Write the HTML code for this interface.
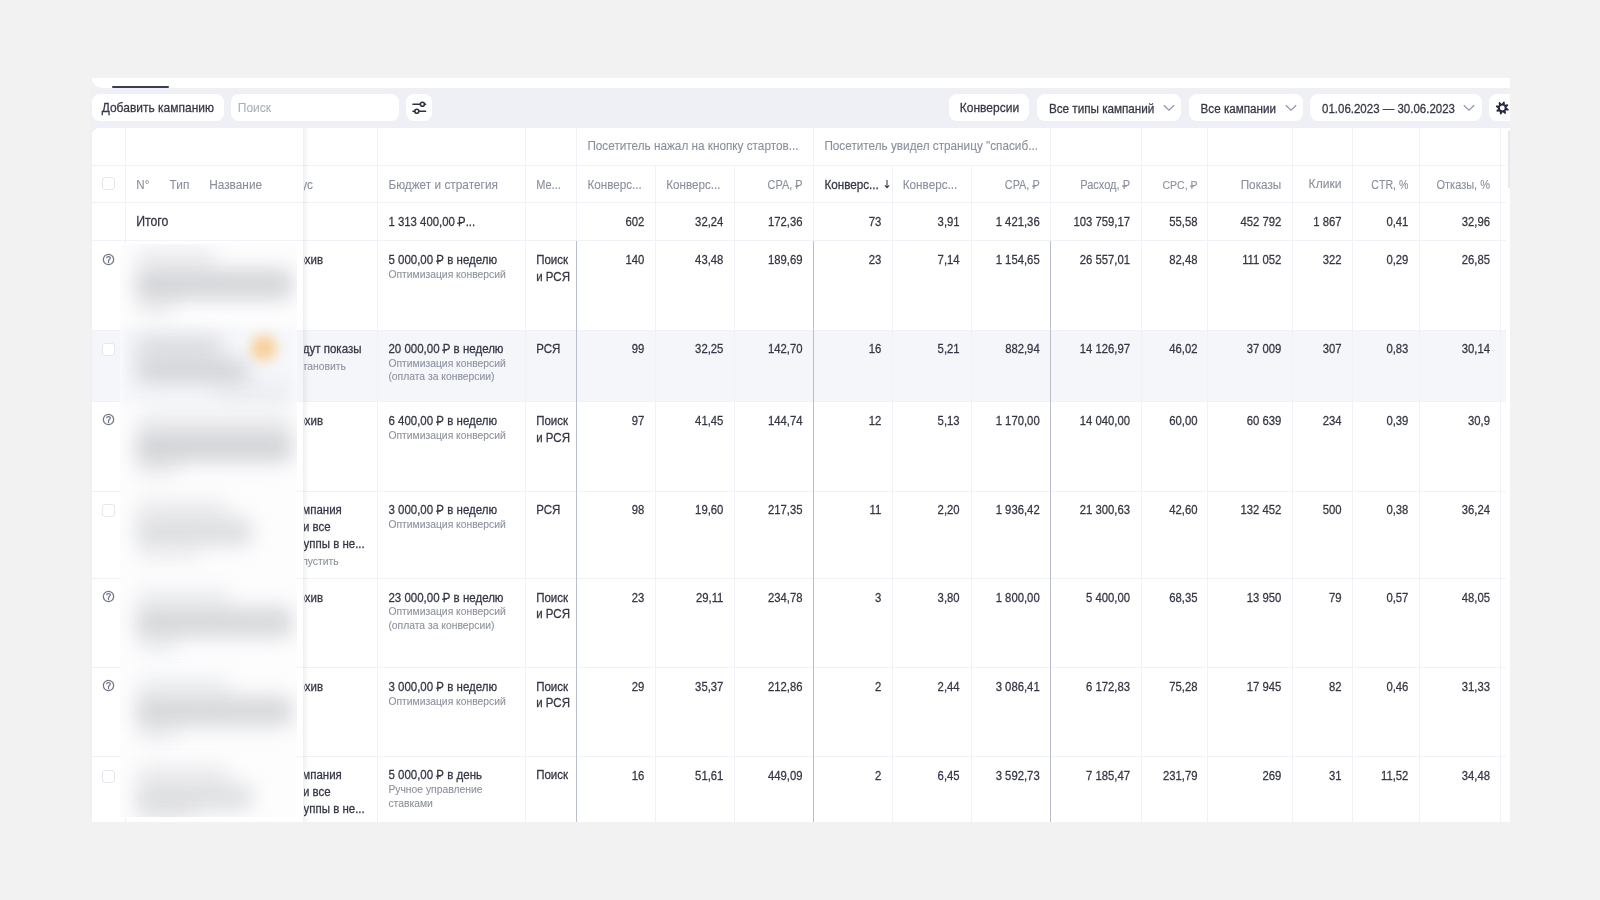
<!DOCTYPE html>
<html><head><meta charset="utf-8"><style>
html,body{margin:0;padding:0}
body{width:1600px;height:900px;overflow:hidden;background:#f2f2f2;position:relative;font-family:"Liberation Sans",sans-serif}
#app{position:absolute;left:0;top:0;width:1510px;height:900px;overflow:hidden}
.r{position:absolute}
.t{position:absolute;white-space:nowrap;transform:scaleY(1.12);transform-origin:0 0.97em;-webkit-text-stroke:0.25px currentColor}
.g{-webkit-text-stroke:0.1px currentColor}
.rb{position:relative;display:inline-block}
.rb::after{content:"";position:absolute;left:-0.06em;width:0.42em;top:0.675em;height:0.075em;background:currentColor}
</style></head><body><div id="app">
<div class="r" style="left:92px;top:78px;width:1418px;height:10px;background:#fff;border-bottom-left-radius:10px;"></div>
<div class="r" style="left:91px;top:87.5px;width:1419px;height:734.5px;background:#eef0f5;"></div>
<div class="r" style="left:112px;top:86px;width:57px;height:2px;background:#393c52;border-radius:1px;"></div>
<div class="r" style="left:92px;top:94px;width:132px;height:27px;background:#fff;border-radius:8px;"></div>
<div class="t" style="top:101.34px;font-size:12px;line-height:15.0px;color:#353745;left:101.7px;">Добавить кампанию</div>
<div class="r" style="left:231px;top:94px;width:168px;height:27px;background:#fff;border-radius:8px;"></div>
<div class="t g" style="top:101.34px;font-size:12px;line-height:15.0px;color:#aab0bd;left:237.8px;">Поиск</div>
<div class="r" style="left:406px;top:94px;width:26px;height:27px;background:#fff;border-radius:8px;"></div>
<svg class="r" style="left:411px;top:100px" width="16" height="16" viewBox="0 0 16 16"><g stroke="#2f3245" stroke-width="1.6" fill="none" stroke-linecap="round"><line x1="2" y1="4.3" x2="9.2" y2="4.3"/><circle cx="11.4" cy="4.3" r="2"/><line x1="13.6" y1="4.3" x2="14.6" y2="4.3"/><line x1="8" y1="11.3" x2="14.6" y2="11.3"/><circle cx="5.8" cy="11.3" r="2"/><line x1="2" y1="11.3" x2="3.6" y2="11.3"/></g></svg>
<div class="r" style="left:949.4px;top:94px;width:80px;height:27px;background:#fff;border-radius:8px;"></div>
<div class="t" style="top:101.34px;font-size:12px;line-height:15.0px;color:#353745;left:959.8px;">Конверсии</div>
<div class="r" style="left:1037px;top:94px;width:144.4px;height:27px;background:#fff;border-radius:8px;"></div>
<div class="t" style="top:101.63px;font-size:11.7px;line-height:14.62px;color:#353745;left:1048.9px;">Все типы кампаний</div>
<div class="r" style="left:1189px;top:94px;width:114px;height:27px;background:#fff;border-radius:8px;"></div>
<div class="t" style="top:101.68px;font-size:11.65px;line-height:14.56px;color:#353745;left:1200.6px;">Все кампании</div>
<div class="r" style="left:1310px;top:94px;width:171.6px;height:27px;background:#fff;border-radius:8px;"></div>
<div class="t" style="top:101.82px;font-size:11.5px;line-height:14.38px;color:#353745;left:1322px;">01.06.2023 — 30.06.2023</div>
<div class="r" style="left:1489px;top:94px;width:40px;height:27px;background:#fff;border-radius:8px;"></div>
<svg class="r" style="left:1162.6px;top:104px" width="12" height="8" viewBox="0 0 12 8"><polyline points="0.8,1.2 6,6.2 11.2,1.2" fill="none" stroke="#8e97aa" stroke-width="1.3"/></svg>
<svg class="r" style="left:1284.5px;top:104px" width="12" height="8" viewBox="0 0 12 8"><polyline points="0.8,1.2 6,6.2 11.2,1.2" fill="none" stroke="#8e97aa" stroke-width="1.3"/></svg>
<svg class="r" style="left:1463.4px;top:104px" width="12" height="8" viewBox="0 0 12 8"><polyline points="0.8,1.2 6,6.2 11.2,1.2" fill="none" stroke="#8e97aa" stroke-width="1.3"/></svg>
<svg class="r" style="left:1495px;top:100.6px" width="15" height="15" viewBox="0 0 15 15"><path fill="#262a3f" fill-rule="evenodd" d="M6.81 2.93 L8.54 0.52 L9.68 0.84 L9.88 3.81 L9.83 3.77 L12.76 3.29 L13.34 4.33 L11.38 6.57 L11.37 6.51 L13.78 8.24 L13.46 9.38 L10.49 9.58 L10.53 9.53 L11.01 12.46 L9.97 13.04 L7.73 11.08 L7.79 11.07 L6.06 13.48 L4.92 13.16 L4.72 10.19 L4.77 10.23 L1.84 10.71 L1.26 9.67 L3.22 7.43 L3.23 7.49 L0.82 5.76 L1.14 4.62 L4.11 4.42 L4.07 4.47 L3.59 1.54 L4.63 0.96 L6.87 2.92 Z M9.75 7 A2.45 2.45 0 1 0 4.85 7 A2.45 2.45 0 1 0 9.75 7 Z"/></svg>
<div class="r" style="left:92px;top:128px;width:1418px;height:693.5px;background:#fff;border-top-left-radius:8px;"></div>
<div class="r" style="left:92px;top:331px;width:1413.5px;height:70px;background:#f4f6fa;"></div>
<div class="r" style="left:92px;top:165px;width:1413.5px;height:1px;background:#f0f2f7;"></div>
<div class="r" style="left:92px;top:202px;width:1413.5px;height:1px;background:#f0f2f7;"></div>
<div class="r" style="left:92px;top:240px;width:1413.5px;height:1px;background:#f0f2f7;"></div>
<div class="r" style="left:92px;top:330px;width:1413.5px;height:1px;background:#f0f2f7;"></div>
<div class="r" style="left:92px;top:401px;width:1413.5px;height:1px;background:#f0f2f7;"></div>
<div class="r" style="left:92px;top:491px;width:1413.5px;height:1px;background:#f0f2f7;"></div>
<div class="r" style="left:92px;top:578px;width:1413.5px;height:1px;background:#f0f2f7;"></div>
<div class="r" style="left:92px;top:667px;width:1413.5px;height:1px;background:#f0f2f7;"></div>
<div class="r" style="left:92px;top:756px;width:1413.5px;height:1px;background:#f0f2f7;"></div>
<div class="r" style="left:125px;top:128px;width:1px;height:693.5px;background:#f0f2f7;"></div>
<div class="r" style="left:377px;top:128px;width:1px;height:693.5px;background:#f0f2f7;"></div>
<div class="r" style="left:525px;top:128px;width:1px;height:693.5px;background:#f0f2f7;"></div>
<div class="r" style="left:655px;top:165px;width:1px;height:656.5px;background:#f0f2f7;"></div>
<div class="r" style="left:734px;top:165px;width:1px;height:656.5px;background:#f0f2f7;"></div>
<div class="r" style="left:892px;top:165px;width:1px;height:656.5px;background:#f0f2f7;"></div>
<div class="r" style="left:971px;top:165px;width:1px;height:656.5px;background:#f0f2f7;"></div>
<div class="r" style="left:1141px;top:128px;width:1px;height:693.5px;background:#f0f2f7;"></div>
<div class="r" style="left:1207px;top:128px;width:1px;height:693.5px;background:#f0f2f7;"></div>
<div class="r" style="left:1292px;top:128px;width:1px;height:693.5px;background:#f0f2f7;"></div>
<div class="r" style="left:1352px;top:128px;width:1px;height:693.5px;background:#f0f2f7;"></div>
<div class="r" style="left:1419px;top:128px;width:1px;height:693.5px;background:#f0f2f7;"></div>
<div class="r" style="left:1500px;top:128px;width:1px;height:693.5px;background:#f0f2f7;"></div>
<div class="r" style="left:576px;top:128px;width:1px;height:113px;background:#f0f2f7;"></div>
<div class="r" style="left:576px;top:241px;width:1px;height:580.5px;background:#b9bfcd;"></div>
<div class="r" style="left:813px;top:128px;width:1px;height:113px;background:#f0f2f7;"></div>
<div class="r" style="left:813px;top:241px;width:1px;height:580.5px;background:#b9bfcd;"></div>
<div class="r" style="left:1050px;top:128px;width:1px;height:113px;background:#f0f2f7;"></div>
<div class="r" style="left:1050px;top:241px;width:1px;height:580.5px;background:#b9bfcd;"></div>
<div class="r" style="left:1508px;top:131px;width:2px;height:57px;background:#e6e9f1;"></div>
<div class="t g" style="top:138.87px;font-size:11.76px;line-height:14.7px;color:#8a8f9c;left:587.4px;">Посетитель нажал на кнопку стартов...</div>
<div class="t g" style="top:138.87px;font-size:11.76px;line-height:14.7px;color:#8a8f9c;left:824.4px;">Посетитель увидел страницу "спасиб...</div>
<div class="t g" style="top:177.69px;font-size:11.85px;line-height:14.81px;color:#8a8f9c;left:388.4px;">Бюджет и стратегия</div>
<div class="t g" style="top:178.51px;font-size:11px;line-height:13.75px;color:#8a8f9c;left:536.2px;">Ме...</div>
<div class="t g" style="top:177.83px;font-size:11.7px;line-height:14.62px;color:#8a8f9c;left:587.4px;">Конверс...</div>
<div class="t g" style="top:177.83px;font-size:11.7px;line-height:14.62px;color:#8a8f9c;left:666.2px;">Конверс...</div>
<div class="t g" style="top:178.61px;font-size:10.9px;line-height:13.62px;color:#8a8f9c;left:402.5px;width:400px;text-align:right;">CPA, <span class="rb">Р</span></div>
<div class="t" style="top:177.83px;font-size:11.7px;line-height:14.62px;color:#353745;left:824.4px;">Конверс...</div>
<div class="t g" style="top:177.83px;font-size:11.7px;line-height:14.62px;color:#8a8f9c;left:902.8px;">Конверс...</div>
<div class="t g" style="top:178.61px;font-size:10.9px;line-height:13.62px;color:#8a8f9c;left:639.7px;width:400px;text-align:right;">CPA, <span class="rb">Р</span></div>
<div class="t g" style="top:178.51px;font-size:11px;line-height:13.75px;color:#8a8f9c;left:730px;width:400px;text-align:right;">Расход, <span class="rb">Р</span></div>
<div class="t g" style="top:179.00px;font-size:10.5px;line-height:13.12px;color:#8a8f9c;left:797.5px;width:400px;text-align:right;">CPC, <span class="rb">Р</span></div>
<div class="t g" style="top:177.78px;font-size:11.75px;line-height:14.69px;color:#8a8f9c;left:881.3px;width:400px;text-align:right;">Показы</div>
<div class="t g" style="top:177.45px;font-size:12.1px;line-height:15.12px;color:#8a8f9c;left:941.5px;width:400px;text-align:right;">Клики</div>
<div class="t g" style="top:178.90px;font-size:10.6px;line-height:13.25px;color:#8a8f9c;left:1008.4000000000001px;width:400px;text-align:right;">CTR, %</div>
<div class="t g" style="top:178.51px;font-size:11px;line-height:13.75px;color:#8a8f9c;left:1090px;width:400px;text-align:right;">Отказы, %</div>
<svg class="r" style="left:884px;top:179px" width="6" height="10" viewBox="0 0 6 10"><path d="M3 1 V8.5 M0.8 6.3 L3 8.6 L5.2 6.3" stroke="#3b3d4f" stroke-width="1.1" fill="none"/></svg>
<div class="t" style="top:215.22px;font-size:11.4px;line-height:14.25px;color:#353745;left:388.4px;">1 313 400,00 <span class="rb">Р</span>...</div>
<div class="t" style="top:215.32px;font-size:11.3px;line-height:14.12px;color:#353745;left:244.39999999999998px;width:400px;text-align:right;">602</div>
<div class="t" style="top:215.32px;font-size:11.3px;line-height:14.12px;color:#353745;left:323.4px;width:400px;text-align:right;">32,24</div>
<div class="t" style="top:215.32px;font-size:11.3px;line-height:14.12px;color:#353745;left:402.5px;width:400px;text-align:right;">172,36</div>
<div class="t" style="top:215.32px;font-size:11.3px;line-height:14.12px;color:#353745;left:481.29999999999995px;width:400px;text-align:right;">73</div>
<div class="t" style="top:215.32px;font-size:11.3px;line-height:14.12px;color:#353745;left:559.6px;width:400px;text-align:right;">3,91</div>
<div class="t" style="top:215.32px;font-size:11.3px;line-height:14.12px;color:#353745;left:639.7px;width:400px;text-align:right;">1 421,36</div>
<div class="t" style="top:215.32px;font-size:11.3px;line-height:14.12px;color:#353745;left:730px;width:400px;text-align:right;">103 759,17</div>
<div class="t" style="top:215.32px;font-size:11.3px;line-height:14.12px;color:#353745;left:797.5px;width:400px;text-align:right;">55,58</div>
<div class="t" style="top:215.32px;font-size:11.3px;line-height:14.12px;color:#353745;left:881.3px;width:400px;text-align:right;">452 792</div>
<div class="t" style="top:215.32px;font-size:11.3px;line-height:14.12px;color:#353745;left:941.5px;width:400px;text-align:right;">1 867</div>
<div class="t" style="top:215.32px;font-size:11.3px;line-height:14.12px;color:#353745;left:1008.4000000000001px;width:400px;text-align:right;">0,41</div>
<div class="t" style="top:215.32px;font-size:11.3px;line-height:14.12px;color:#353745;left:1090px;width:400px;text-align:right;">32,96</div>
<div class="t" style="top:253.12px;font-size:11.5px;line-height:14.38px;color:#353745;left:388.4px;">5 000,00 <span class="rb">Р</span> в неделю</div>
<div class="t g" style="top:269.04px;font-size:10.35px;line-height:12.94px;color:#8d929e;left:388.4px;">Оптимизация конверсий</div>
<div class="t" style="top:253.12px;font-size:11.5px;line-height:14.38px;color:#353745;left:536.2px;">Поиск</div>
<div class="t" style="top:269.92px;font-size:11.5px;line-height:14.38px;color:#353745;left:536.2px;">и РСЯ</div>
<div class="t" style="top:253.32px;font-size:11.3px;line-height:14.12px;color:#353745;left:244.39999999999998px;width:400px;text-align:right;">140</div>
<div class="t" style="top:253.32px;font-size:11.3px;line-height:14.12px;color:#353745;left:323.4px;width:400px;text-align:right;">43,48</div>
<div class="t" style="top:253.32px;font-size:11.3px;line-height:14.12px;color:#353745;left:402.5px;width:400px;text-align:right;">189,69</div>
<div class="t" style="top:253.32px;font-size:11.3px;line-height:14.12px;color:#353745;left:481.29999999999995px;width:400px;text-align:right;">23</div>
<div class="t" style="top:253.32px;font-size:11.3px;line-height:14.12px;color:#353745;left:559.6px;width:400px;text-align:right;">7,14</div>
<div class="t" style="top:253.32px;font-size:11.3px;line-height:14.12px;color:#353745;left:639.7px;width:400px;text-align:right;">1 154,65</div>
<div class="t" style="top:253.32px;font-size:11.3px;line-height:14.12px;color:#353745;left:730px;width:400px;text-align:right;">26 557,01</div>
<div class="t" style="top:253.32px;font-size:11.3px;line-height:14.12px;color:#353745;left:797.5px;width:400px;text-align:right;">82,48</div>
<div class="t" style="top:253.32px;font-size:11.3px;line-height:14.12px;color:#353745;left:881.3px;width:400px;text-align:right;">111 052</div>
<div class="t" style="top:253.32px;font-size:11.3px;line-height:14.12px;color:#353745;left:941.5px;width:400px;text-align:right;">322</div>
<div class="t" style="top:253.32px;font-size:11.3px;line-height:14.12px;color:#353745;left:1008.4000000000001px;width:400px;text-align:right;">0,29</div>
<div class="t" style="top:253.32px;font-size:11.3px;line-height:14.12px;color:#353745;left:1090px;width:400px;text-align:right;">26,85</div>
<div class="t" style="top:341.82px;font-size:11.5px;line-height:14.38px;color:#353745;left:388.4px;">20 000,00 <span class="rb">Р</span> в неделю</div>
<div class="t g" style="top:357.74px;font-size:10.35px;line-height:12.94px;color:#8d929e;left:388.4px;">Оптимизация конверсий</div>
<div class="t g" style="top:371.24px;font-size:10.35px;line-height:12.94px;color:#8d929e;left:388.4px;">(оплата за конверсии)</div>
<div class="t" style="top:341.82px;font-size:11.5px;line-height:14.38px;color:#353745;left:536.2px;">РСЯ</div>
<div class="t" style="top:342.02px;font-size:11.3px;line-height:14.12px;color:#353745;left:244.39999999999998px;width:400px;text-align:right;">99</div>
<div class="t" style="top:342.02px;font-size:11.3px;line-height:14.12px;color:#353745;left:323.4px;width:400px;text-align:right;">32,25</div>
<div class="t" style="top:342.02px;font-size:11.3px;line-height:14.12px;color:#353745;left:402.5px;width:400px;text-align:right;">142,70</div>
<div class="t" style="top:342.02px;font-size:11.3px;line-height:14.12px;color:#353745;left:481.29999999999995px;width:400px;text-align:right;">16</div>
<div class="t" style="top:342.02px;font-size:11.3px;line-height:14.12px;color:#353745;left:559.6px;width:400px;text-align:right;">5,21</div>
<div class="t" style="top:342.02px;font-size:11.3px;line-height:14.12px;color:#353745;left:639.7px;width:400px;text-align:right;">882,94</div>
<div class="t" style="top:342.02px;font-size:11.3px;line-height:14.12px;color:#353745;left:730px;width:400px;text-align:right;">14 126,97</div>
<div class="t" style="top:342.02px;font-size:11.3px;line-height:14.12px;color:#353745;left:797.5px;width:400px;text-align:right;">46,02</div>
<div class="t" style="top:342.02px;font-size:11.3px;line-height:14.12px;color:#353745;left:881.3px;width:400px;text-align:right;">37 009</div>
<div class="t" style="top:342.02px;font-size:11.3px;line-height:14.12px;color:#353745;left:941.5px;width:400px;text-align:right;">307</div>
<div class="t" style="top:342.02px;font-size:11.3px;line-height:14.12px;color:#353745;left:1008.4000000000001px;width:400px;text-align:right;">0,83</div>
<div class="t" style="top:342.02px;font-size:11.3px;line-height:14.12px;color:#353745;left:1090px;width:400px;text-align:right;">30,14</div>
<div class="t" style="top:413.82px;font-size:11.5px;line-height:14.38px;color:#353745;left:388.4px;">6 400,00 <span class="rb">Р</span> в неделю</div>
<div class="t g" style="top:429.74px;font-size:10.35px;line-height:12.94px;color:#8d929e;left:388.4px;">Оптимизация конверсий</div>
<div class="t" style="top:413.82px;font-size:11.5px;line-height:14.38px;color:#353745;left:536.2px;">Поиск</div>
<div class="t" style="top:430.62px;font-size:11.5px;line-height:14.38px;color:#353745;left:536.2px;">и РСЯ</div>
<div class="t" style="top:414.02px;font-size:11.3px;line-height:14.12px;color:#353745;left:244.39999999999998px;width:400px;text-align:right;">97</div>
<div class="t" style="top:414.02px;font-size:11.3px;line-height:14.12px;color:#353745;left:323.4px;width:400px;text-align:right;">41,45</div>
<div class="t" style="top:414.02px;font-size:11.3px;line-height:14.12px;color:#353745;left:402.5px;width:400px;text-align:right;">144,74</div>
<div class="t" style="top:414.02px;font-size:11.3px;line-height:14.12px;color:#353745;left:481.29999999999995px;width:400px;text-align:right;">12</div>
<div class="t" style="top:414.02px;font-size:11.3px;line-height:14.12px;color:#353745;left:559.6px;width:400px;text-align:right;">5,13</div>
<div class="t" style="top:414.02px;font-size:11.3px;line-height:14.12px;color:#353745;left:639.7px;width:400px;text-align:right;">1 170,00</div>
<div class="t" style="top:414.02px;font-size:11.3px;line-height:14.12px;color:#353745;left:730px;width:400px;text-align:right;">14 040,00</div>
<div class="t" style="top:414.02px;font-size:11.3px;line-height:14.12px;color:#353745;left:797.5px;width:400px;text-align:right;">60,00</div>
<div class="t" style="top:414.02px;font-size:11.3px;line-height:14.12px;color:#353745;left:881.3px;width:400px;text-align:right;">60 639</div>
<div class="t" style="top:414.02px;font-size:11.3px;line-height:14.12px;color:#353745;left:941.5px;width:400px;text-align:right;">234</div>
<div class="t" style="top:414.02px;font-size:11.3px;line-height:14.12px;color:#353745;left:1008.4000000000001px;width:400px;text-align:right;">0,39</div>
<div class="t" style="top:414.02px;font-size:11.3px;line-height:14.12px;color:#353745;left:1090px;width:400px;text-align:right;">30,9</div>
<div class="t" style="top:503.12px;font-size:11.5px;line-height:14.38px;color:#353745;left:388.4px;">3 000,00 <span class="rb">Р</span> в неделю</div>
<div class="t g" style="top:519.04px;font-size:10.35px;line-height:12.94px;color:#8d929e;left:388.4px;">Оптимизация конверсий</div>
<div class="t" style="top:503.12px;font-size:11.5px;line-height:14.38px;color:#353745;left:536.2px;">РСЯ</div>
<div class="t" style="top:503.32px;font-size:11.3px;line-height:14.12px;color:#353745;left:244.39999999999998px;width:400px;text-align:right;">98</div>
<div class="t" style="top:503.32px;font-size:11.3px;line-height:14.12px;color:#353745;left:323.4px;width:400px;text-align:right;">19,60</div>
<div class="t" style="top:503.32px;font-size:11.3px;line-height:14.12px;color:#353745;left:402.5px;width:400px;text-align:right;">217,35</div>
<div class="t" style="top:503.32px;font-size:11.3px;line-height:14.12px;color:#353745;left:481.29999999999995px;width:400px;text-align:right;">11</div>
<div class="t" style="top:503.32px;font-size:11.3px;line-height:14.12px;color:#353745;left:559.6px;width:400px;text-align:right;">2,20</div>
<div class="t" style="top:503.32px;font-size:11.3px;line-height:14.12px;color:#353745;left:639.7px;width:400px;text-align:right;">1 936,42</div>
<div class="t" style="top:503.32px;font-size:11.3px;line-height:14.12px;color:#353745;left:730px;width:400px;text-align:right;">21 300,63</div>
<div class="t" style="top:503.32px;font-size:11.3px;line-height:14.12px;color:#353745;left:797.5px;width:400px;text-align:right;">42,60</div>
<div class="t" style="top:503.32px;font-size:11.3px;line-height:14.12px;color:#353745;left:881.3px;width:400px;text-align:right;">132 452</div>
<div class="t" style="top:503.32px;font-size:11.3px;line-height:14.12px;color:#353745;left:941.5px;width:400px;text-align:right;">500</div>
<div class="t" style="top:503.32px;font-size:11.3px;line-height:14.12px;color:#353745;left:1008.4000000000001px;width:400px;text-align:right;">0,38</div>
<div class="t" style="top:503.32px;font-size:11.3px;line-height:14.12px;color:#353745;left:1090px;width:400px;text-align:right;">36,24</div>
<div class="t" style="top:590.52px;font-size:11.5px;line-height:14.38px;color:#353745;left:388.4px;">23 000,00 <span class="rb">Р</span> в неделю</div>
<div class="t g" style="top:606.44px;font-size:10.35px;line-height:12.94px;color:#8d929e;left:388.4px;">Оптимизация конверсий</div>
<div class="t g" style="top:619.94px;font-size:10.35px;line-height:12.94px;color:#8d929e;left:388.4px;">(оплата за конверсии)</div>
<div class="t" style="top:590.52px;font-size:11.5px;line-height:14.38px;color:#353745;left:536.2px;">Поиск</div>
<div class="t" style="top:607.32px;font-size:11.5px;line-height:14.38px;color:#353745;left:536.2px;">и РСЯ</div>
<div class="t" style="top:590.72px;font-size:11.3px;line-height:14.12px;color:#353745;left:244.39999999999998px;width:400px;text-align:right;">23</div>
<div class="t" style="top:590.72px;font-size:11.3px;line-height:14.12px;color:#353745;left:323.4px;width:400px;text-align:right;">29,11</div>
<div class="t" style="top:590.72px;font-size:11.3px;line-height:14.12px;color:#353745;left:402.5px;width:400px;text-align:right;">234,78</div>
<div class="t" style="top:590.72px;font-size:11.3px;line-height:14.12px;color:#353745;left:481.29999999999995px;width:400px;text-align:right;">3</div>
<div class="t" style="top:590.72px;font-size:11.3px;line-height:14.12px;color:#353745;left:559.6px;width:400px;text-align:right;">3,80</div>
<div class="t" style="top:590.72px;font-size:11.3px;line-height:14.12px;color:#353745;left:639.7px;width:400px;text-align:right;">1 800,00</div>
<div class="t" style="top:590.72px;font-size:11.3px;line-height:14.12px;color:#353745;left:730px;width:400px;text-align:right;">5 400,00</div>
<div class="t" style="top:590.72px;font-size:11.3px;line-height:14.12px;color:#353745;left:797.5px;width:400px;text-align:right;">68,35</div>
<div class="t" style="top:590.72px;font-size:11.3px;line-height:14.12px;color:#353745;left:881.3px;width:400px;text-align:right;">13 950</div>
<div class="t" style="top:590.72px;font-size:11.3px;line-height:14.12px;color:#353745;left:941.5px;width:400px;text-align:right;">79</div>
<div class="t" style="top:590.72px;font-size:11.3px;line-height:14.12px;color:#353745;left:1008.4000000000001px;width:400px;text-align:right;">0,57</div>
<div class="t" style="top:590.72px;font-size:11.3px;line-height:14.12px;color:#353745;left:1090px;width:400px;text-align:right;">48,05</div>
<div class="t" style="top:679.62px;font-size:11.5px;line-height:14.38px;color:#353745;left:388.4px;">3 000,00 <span class="rb">Р</span> в неделю</div>
<div class="t g" style="top:695.54px;font-size:10.35px;line-height:12.94px;color:#8d929e;left:388.4px;">Оптимизация конверсий</div>
<div class="t" style="top:679.62px;font-size:11.5px;line-height:14.38px;color:#353745;left:536.2px;">Поиск</div>
<div class="t" style="top:696.42px;font-size:11.5px;line-height:14.38px;color:#353745;left:536.2px;">и РСЯ</div>
<div class="t" style="top:679.82px;font-size:11.3px;line-height:14.12px;color:#353745;left:244.39999999999998px;width:400px;text-align:right;">29</div>
<div class="t" style="top:679.82px;font-size:11.3px;line-height:14.12px;color:#353745;left:323.4px;width:400px;text-align:right;">35,37</div>
<div class="t" style="top:679.82px;font-size:11.3px;line-height:14.12px;color:#353745;left:402.5px;width:400px;text-align:right;">212,86</div>
<div class="t" style="top:679.82px;font-size:11.3px;line-height:14.12px;color:#353745;left:481.29999999999995px;width:400px;text-align:right;">2</div>
<div class="t" style="top:679.82px;font-size:11.3px;line-height:14.12px;color:#353745;left:559.6px;width:400px;text-align:right;">2,44</div>
<div class="t" style="top:679.82px;font-size:11.3px;line-height:14.12px;color:#353745;left:639.7px;width:400px;text-align:right;">3 086,41</div>
<div class="t" style="top:679.82px;font-size:11.3px;line-height:14.12px;color:#353745;left:730px;width:400px;text-align:right;">6 172,83</div>
<div class="t" style="top:679.82px;font-size:11.3px;line-height:14.12px;color:#353745;left:797.5px;width:400px;text-align:right;">75,28</div>
<div class="t" style="top:679.82px;font-size:11.3px;line-height:14.12px;color:#353745;left:881.3px;width:400px;text-align:right;">17 945</div>
<div class="t" style="top:679.82px;font-size:11.3px;line-height:14.12px;color:#353745;left:941.5px;width:400px;text-align:right;">82</div>
<div class="t" style="top:679.82px;font-size:11.3px;line-height:14.12px;color:#353745;left:1008.4000000000001px;width:400px;text-align:right;">0,46</div>
<div class="t" style="top:679.82px;font-size:11.3px;line-height:14.12px;color:#353745;left:1090px;width:400px;text-align:right;">31,33</div>
<div class="t" style="top:768.32px;font-size:11.5px;line-height:14.38px;color:#353745;left:388.4px;">5 000,00 <span class="rb">Р</span> в день</div>
<div class="t g" style="top:784.24px;font-size:10.35px;line-height:12.94px;color:#8d929e;left:388.4px;">Ручное управление</div>
<div class="t g" style="top:797.74px;font-size:10.35px;line-height:12.94px;color:#8d929e;left:388.4px;">ставками</div>
<div class="t" style="top:768.32px;font-size:11.5px;line-height:14.38px;color:#353745;left:536.2px;">Поиск</div>
<div class="t" style="top:768.52px;font-size:11.3px;line-height:14.12px;color:#353745;left:244.39999999999998px;width:400px;text-align:right;">16</div>
<div class="t" style="top:768.52px;font-size:11.3px;line-height:14.12px;color:#353745;left:323.4px;width:400px;text-align:right;">51,61</div>
<div class="t" style="top:768.52px;font-size:11.3px;line-height:14.12px;color:#353745;left:402.5px;width:400px;text-align:right;">449,09</div>
<div class="t" style="top:768.52px;font-size:11.3px;line-height:14.12px;color:#353745;left:481.29999999999995px;width:400px;text-align:right;">2</div>
<div class="t" style="top:768.52px;font-size:11.3px;line-height:14.12px;color:#353745;left:559.6px;width:400px;text-align:right;">6,45</div>
<div class="t" style="top:768.52px;font-size:11.3px;line-height:14.12px;color:#353745;left:639.7px;width:400px;text-align:right;">3 592,73</div>
<div class="t" style="top:768.52px;font-size:11.3px;line-height:14.12px;color:#353745;left:730px;width:400px;text-align:right;">7 185,47</div>
<div class="t" style="top:768.52px;font-size:11.3px;line-height:14.12px;color:#353745;left:797.5px;width:400px;text-align:right;">231,79</div>
<div class="t" style="top:768.52px;font-size:11.3px;line-height:14.12px;color:#353745;left:881.3px;width:400px;text-align:right;">269</div>
<div class="t" style="top:768.52px;font-size:11.3px;line-height:14.12px;color:#353745;left:941.5px;width:400px;text-align:right;">31</div>
<div class="t" style="top:768.52px;font-size:11.3px;line-height:14.12px;color:#353745;left:1008.4000000000001px;width:400px;text-align:right;">11,52</div>
<div class="t" style="top:768.52px;font-size:11.3px;line-height:14.12px;color:#353745;left:1090px;width:400px;text-align:right;">34,48</div>
<div class="r" style="left:304px;top:241px;width:73px;height:580px;overflow:hidden">
<div class="t" style="top:12.12px;font-size:11.5px;line-height:14.38px;color:#353745;left:-13.2px;">Архив</div>
<div class="t" style="top:100.82px;font-size:11.5px;line-height:14.38px;color:#353745;left:-25.5px;">Не идут показы</div>
<div class="t g" style="top:119.64px;font-size:10.35px;line-height:12.94px;color:#8d929e;left:-14.5px;">Остановить</div>
<div class="t" style="top:172.82px;font-size:11.5px;line-height:14.38px;color:#353745;left:-13.2px;">Архив</div>
<div class="t" style="top:262.12px;font-size:11.5px;line-height:14.38px;color:#353745;left:-14.8px;">Кампания</div>
<div class="t" style="top:278.92px;font-size:11.5px;line-height:14.38px;color:#353745;left:-1.0px;">и все</div>
<div class="t" style="top:295.72px;font-size:11.5px;line-height:14.38px;color:#353745;left:-11.0px;">группы в не...</div>
<div class="t g" style="top:314.54px;font-size:10.35px;line-height:12.94px;color:#8d929e;left:-13.8px;">Запустить</div>
<div class="t" style="top:349.52px;font-size:11.5px;line-height:14.38px;color:#353745;left:-13.2px;">Архив</div>
<div class="t" style="top:438.62px;font-size:11.5px;line-height:14.38px;color:#353745;left:-13.2px;">Архив</div>
<div class="t" style="top:527.32px;font-size:11.5px;line-height:14.38px;color:#353745;left:-14.8px;">Кампания</div>
<div class="t" style="top:544.12px;font-size:11.5px;line-height:14.38px;color:#353745;left:-1.0px;">и все</div>
<div class="t" style="top:560.92px;font-size:11.5px;line-height:14.38px;color:#353745;left:-11.0px;">группы в не...</div>
</div>
<div class="r" style="left:92px;top:128px;width:211.5px;height:693.5px;background:#fff;border-top-left-radius:8px;"></div>
<div class="r" style="left:92px;top:331px;width:211.5px;height:70px;background:#f4f6fa;"></div>
<div class="r" style="left:92px;top:165px;width:211.5px;height:1px;background:#f0f2f7;"></div>
<div class="r" style="left:92px;top:202px;width:211.5px;height:1px;background:#f0f2f7;"></div>
<div class="r" style="left:92px;top:240px;width:211.5px;height:1px;background:#f0f2f7;"></div>
<div class="r" style="left:92px;top:330px;width:211.5px;height:1px;background:#f0f2f7;"></div>
<div class="r" style="left:92px;top:401px;width:211.5px;height:1px;background:#f0f2f7;"></div>
<div class="r" style="left:92px;top:491px;width:211.5px;height:1px;background:#f0f2f7;"></div>
<div class="r" style="left:92px;top:578px;width:211.5px;height:1px;background:#f0f2f7;"></div>
<div class="r" style="left:92px;top:667px;width:211.5px;height:1px;background:#f0f2f7;"></div>
<div class="r" style="left:92px;top:756px;width:211.5px;height:1px;background:#f0f2f7;"></div>
<div class="r" style="left:125px;top:128px;width:1px;height:693.5px;background:#f0f2f7;"></div>
<div class="r" style="left:303px;top:128px;width:7px;height:693.5px;background:linear-gradient(90deg,rgba(40,45,70,0.075),rgba(40,45,70,0.02) 60%,rgba(40,45,70,0));"></div>
<svg class="r" style="left:101.8px;top:252.60px" width="13" height="13" viewBox="0 0 13 13"><circle cx="6.5" cy="6.5" r="5.15" fill="none" stroke="#737888" stroke-width="1.3"/><path d="M4.6 5.3 C4.6 4.1 5.4 3.6 6.5 3.6 C7.6 3.6 8.4 4.3 8.4 5.1 C8.4 6.2 6.5 6.5 6.5 8 V10.2" fill="none" stroke="#737888" stroke-width="1.25"/></svg>
<div class="r" style="left:102px;top:343.00px;width:13px;height:13px;background:#fff;border:1px solid #e4e7ee;border-radius:3px;box-sizing:border-box;"></div>
<svg class="r" style="left:101.8px;top:413.30px" width="13" height="13" viewBox="0 0 13 13"><circle cx="6.5" cy="6.5" r="5.15" fill="none" stroke="#737888" stroke-width="1.3"/><path d="M4.6 5.3 C4.6 4.1 5.4 3.6 6.5 3.6 C7.6 3.6 8.4 4.3 8.4 5.1 C8.4 6.2 6.5 6.5 6.5 8 V10.2" fill="none" stroke="#737888" stroke-width="1.25"/></svg>
<div class="r" style="left:102px;top:504.30px;width:13px;height:13px;background:#fff;border:1px solid #e4e7ee;border-radius:3px;box-sizing:border-box;"></div>
<svg class="r" style="left:101.8px;top:590.00px" width="13" height="13" viewBox="0 0 13 13"><circle cx="6.5" cy="6.5" r="5.15" fill="none" stroke="#737888" stroke-width="1.3"/><path d="M4.6 5.3 C4.6 4.1 5.4 3.6 6.5 3.6 C7.6 3.6 8.4 4.3 8.4 5.1 C8.4 6.2 6.5 6.5 6.5 8 V10.2" fill="none" stroke="#737888" stroke-width="1.25"/></svg>
<svg class="r" style="left:101.8px;top:679.10px" width="13" height="13" viewBox="0 0 13 13"><circle cx="6.5" cy="6.5" r="5.15" fill="none" stroke="#737888" stroke-width="1.3"/><path d="M4.6 5.3 C4.6 4.1 5.4 3.6 6.5 3.6 C7.6 3.6 8.4 4.3 8.4 5.1 C8.4 6.2 6.5 6.5 6.5 8 V10.2" fill="none" stroke="#737888" stroke-width="1.25"/></svg>
<div class="r" style="left:102px;top:769.50px;width:13px;height:13px;background:#fff;border:1px solid #e4e7ee;border-radius:3px;box-sizing:border-box;"></div>
<div class="r" style="left:102px;top:177.2px;width:13px;height:13px;background:#fff;border:1px solid #e4e7ee;border-radius:3px;box-sizing:border-box;"></div>
<div class="t g" style="top:177.93px;font-size:11.6px;line-height:14.5px;color:#8a8f9c;left:136.3px;">N°</div>
<div class="t g" style="top:177.69px;font-size:11.85px;line-height:14.81px;color:#8a8f9c;left:169.6px;">Тип</div>
<div class="t g" style="top:177.69px;font-size:11.85px;line-height:14.81px;color:#8a8f9c;left:209.2px;">Название</div>
<div class="t" style="top:215.35px;font-size:12.3px;line-height:15.38px;color:#353745;left:136.2px;">Итого</div>
<div class="r" style="left:304px;top:165px;width:72px;height:38px;overflow:hidden">
<div class="t g" style="top:12.69px;font-size:11.85px;line-height:14.81px;color:#8a8f9c;left:-28.5px;">Статус</div>
</div>
<div class="r" style="left:120px;top:244px;width:177px;height:573px;background:#fdfdfe;overflow:hidden">
<div class="r" style="left:0;top:83px;width:177px;height:78px;background:#f6f7fa;filter:blur(4px)"></div>
<div class="r" style="left:16px;top:4.0px;width:79px;height:20px;background:rgba(170,172,178,0.203);filter:blur(10px);border-radius:8px"></div>
<div class="r" style="left:16px;top:25.0px;width:156px;height:30px;background:rgba(170,172,178,0.493);filter:blur(10px);border-radius:8px"></div>
<div class="r" style="left:16px;top:53.0px;width:39px;height:18px;background:rgba(170,172,178,0.203);filter:blur(10px);border-radius:8px"></div>
<div class="r" style="left:16px;top:92.0px;width:86px;height:22px;background:rgba(170,172,178,0.348);filter:blur(10px);border-radius:8px"></div>
<div class="r" style="left:16px;top:115.0px;width:112px;height:24px;background:rgba(170,172,178,0.464);filter:blur(10px);border-radius:8px"></div>
<div class="r" style="left:95px;top:139.0px;width:77px;height:16px;background:rgba(170,172,178,0.145);filter:blur(10px);border-radius:8px"></div>
<div class="r" style="left:16px;top:166.0px;width:156px;height:20px;background:rgba(170,172,178,0.174);filter:blur(10px);border-radius:8px"></div>
<div class="r" style="left:16px;top:186.0px;width:156px;height:32px;background:rgba(170,172,178,0.493);filter:blur(10px);border-radius:8px"></div>
<div class="r" style="left:16px;top:214.0px;width:42px;height:18px;background:rgba(170,172,178,0.203);filter:blur(10px);border-radius:8px"></div>
<div class="r" style="left:16px;top:255.0px;width:92px;height:20px;background:rgba(170,172,178,0.203);filter:blur(10px);border-radius:8px"></div>
<div class="r" style="left:16px;top:274.0px;width:116px;height:28px;background:rgba(170,172,178,0.377);filter:blur(10px);border-radius:8px"></div>
<div class="r" style="left:16px;top:302.0px;width:64px;height:16px;background:rgba(170,172,178,0.145);filter:blur(10px);border-radius:8px"></div>
<div class="r" style="left:16px;top:343.0px;width:94px;height:20px;background:rgba(170,172,178,0.174);filter:blur(10px);border-radius:8px"></div>
<div class="r" style="left:16px;top:363.0px;width:156px;height:30px;background:rgba(170,172,178,0.464);filter:blur(10px);border-radius:8px"></div>
<div class="r" style="left:16px;top:391.0px;width:42px;height:18px;background:rgba(170,172,178,0.174);filter:blur(10px);border-radius:8px"></div>
<div class="r" style="left:16px;top:432.0px;width:94px;height:20px;background:rgba(170,172,178,0.174);filter:blur(10px);border-radius:8px"></div>
<div class="r" style="left:16px;top:452.0px;width:156px;height:30px;background:rgba(170,172,178,0.464);filter:blur(10px);border-radius:8px"></div>
<div class="r" style="left:16px;top:480.0px;width:42px;height:18px;background:rgba(170,172,178,0.174);filter:blur(10px);border-radius:8px"></div>
<div class="r" style="left:16px;top:521.0px;width:92px;height:20px;background:rgba(170,172,178,0.203);filter:blur(10px);border-radius:8px"></div>
<div class="r" style="left:16px;top:539.0px;width:116px;height:28px;background:rgba(170,172,178,0.348);filter:blur(10px);border-radius:8px"></div>
<div class="r" style="left:16px;top:562.0px;width:59px;height:18px;background:rgba(170,172,178,0.203);filter:blur(10px);border-radius:8px"></div>
<div class="r" style="left:131px;top:91px;width:26px;height:26px;background:rgba(250,192,115,0.7);border-radius:50%;filter:blur(6px)"></div>
</div>
</div></body></html>
